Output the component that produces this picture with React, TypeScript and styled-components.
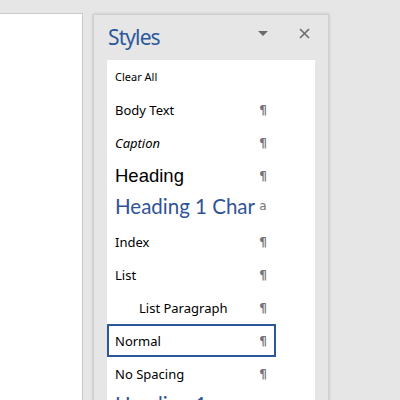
import styled, { createGlobalStyle } from "styled-components";

const GlobalStyle = createGlobalStyle`
  html, body {
    margin: 0;
    padding: 0;
    background: #e6e6e6;
  }
`;

type StyleItem = {
  name: string;
  kind: "para" | "char" | "none";
  variant?: "clear" | "italic" | "heading" | "heading1" | "indent";
  selected?: boolean;
};

const items: StyleItem[] = [
  { name: "Clear All", kind: "none", variant: "clear" },
  { name: "Body Text", kind: "para" },
  { name: "Caption", kind: "para", variant: "italic" },
  { name: "Heading", kind: "para", variant: "heading" },
  { name: "Heading 1 Char", kind: "char", variant: "heading1" },
  { name: "Index", kind: "para" },
  { name: "List", kind: "para" },
  { name: "List Paragraph", kind: "para", variant: "indent" },
  { name: "Normal", kind: "para", selected: true },
  { name: "No Spacing", kind: "para" },
  { name: "Heading 1", kind: "para", variant: "heading1" },
];

function App() {
  return (
    <Screen>
      <GlobalStyle />
      <Document />
      <Pane>
        <PaneHeader>
          <Title>Styles</Title>
          <HeaderIcons>
            <IconButton aria-label="Options">
              <svg width="10" height="6" viewBox="0 0 10 6">
                <path d="M0 0 H10 L5 5 Z" fill="#6b6b6b" />
              </svg>
            </IconButton>
            <IconButton aria-label="Close">
              <svg width="11" height="11" viewBox="0 0 11 11">
                <path
                  d="M1 1 L10 10 M10 1 L1 10"
                  stroke="#6b6b6b"
                  strokeWidth="1.6"
                />
              </svg>
            </IconButton>
          </HeaderIcons>
        </PaneHeader>
        <List>
          {items.map((item) => (
            <Row key={item.name} $selected={item.selected}>
              <Label $variant={item.variant}>{item.name}</Label>
              {item.kind !== "none" && (
                <Mark $char={item.kind === "char"}>
                  {item.kind === "char" ? "a" : "¶"}
                </Mark>
              )}
            </Row>
          ))}
        </List>
      </Pane>
    </Screen>
  );
}

const Screen = styled.div`
  width: 400px;
  height: 400px;
  overflow: hidden;
  display: flex;
  align-items: flex-start;
  background: #e6e6e6;
  font-family: "Segoe UI", "Noto Sans", "Open Sans", sans-serif;
`;

const Document = styled.div`
  width: 83px;
  height: 400px;
  margin-top: 13px;
  flex-shrink: 0;
  background: #ffffff;
  border-top: 1px solid #c8c8c8;
  border-right: 1px solid #c8c8c8;
  box-sizing: border-box;
`;

const Pane = styled.div`
  margin-left: 10px;
  margin-top: 14px;
  width: 236px;
  height: 400px;
  flex-shrink: 0;
  box-sizing: border-box;
  background: #e6e6e6;
  border-top: 1px solid #cfcfcf;
  border-left: 1px solid #cfcfcf;
  border-right: 1px solid #cfcfcf;
  box-shadow: 0 0 3px rgba(0, 0, 0, 0.18);
  display: flex;
  flex-direction: column;
`;

const PaneHeader = styled.div`
  height: 45px;
  flex-shrink: 0;
  display: flex;
  align-items: center;
  justify-content: space-between;
  padding: 0 18px 0 14px;
`;

const Title = styled.div`
  font-family: "Segoe UI", "Noto Sans", "Open Sans", sans-serif;
  font-size: 21px;
  letter-spacing: -0.9px;
  color: #2b579a;
  margin-top: -1px;
`;

const HeaderIcons = styled.div`
  display: flex;
  align-items: center;
  gap: 31px;
  margin-top: -8px;
`;

const IconButton = styled.div`
  display: flex;
  align-items: center;
  justify-content: center;
`;

const List = styled.div`
  margin-left: 13px;
  width: 208px;
  flex: 1;
  background: #ffffff;
  display: flex;
  flex-direction: column;
`;

const Row = styled.div<{ $selected?: boolean }>`
  height: 33px;
  flex-shrink: 0;
  box-sizing: border-box;
  width: 169px;
  display: flex;
  align-items: center;
  justify-content: space-between;
  padding: 0 6px 0 6px;
  border: 2px solid ${(p) => (p.$selected ? "#2b579a" : "transparent")};
`;

const Label = styled.span<{ $variant?: StyleItem["variant"] }>`
  color: #000;
  white-space: nowrap;
  font-size: 13px;
  ${(p) => p.$variant === "clear" && "font-size: 11px;"}
  ${(p) => p.$variant === "italic" && "font-style: italic;"}
  ${(p) =>
    p.$variant === "heading" &&
    `font-family: "Liberation Sans", Arial, sans-serif; font-size: 18.5px;`}
  ${(p) =>
    p.$variant === "heading1" &&
    `font-family: "Lato", "Open Sans", sans-serif; font-size: 20.5px; color: #2f5496; margin-bottom: 5px;`}
  ${(p) => p.$variant === "indent" && "padding-left: 24px;"}
`;

const Mark = styled.span<{ $char?: boolean }>`
  color: #737373;
  font-size: 12px;
  font-weight: ${(p) => (p.$char ? "normal" : "bold")};
  font-family: "DejaVu Sans", sans-serif;
  width: 10px;
  text-align: center;
  ${(p) => p.$char && "margin-bottom: 6px;"}
`;

export default App;
